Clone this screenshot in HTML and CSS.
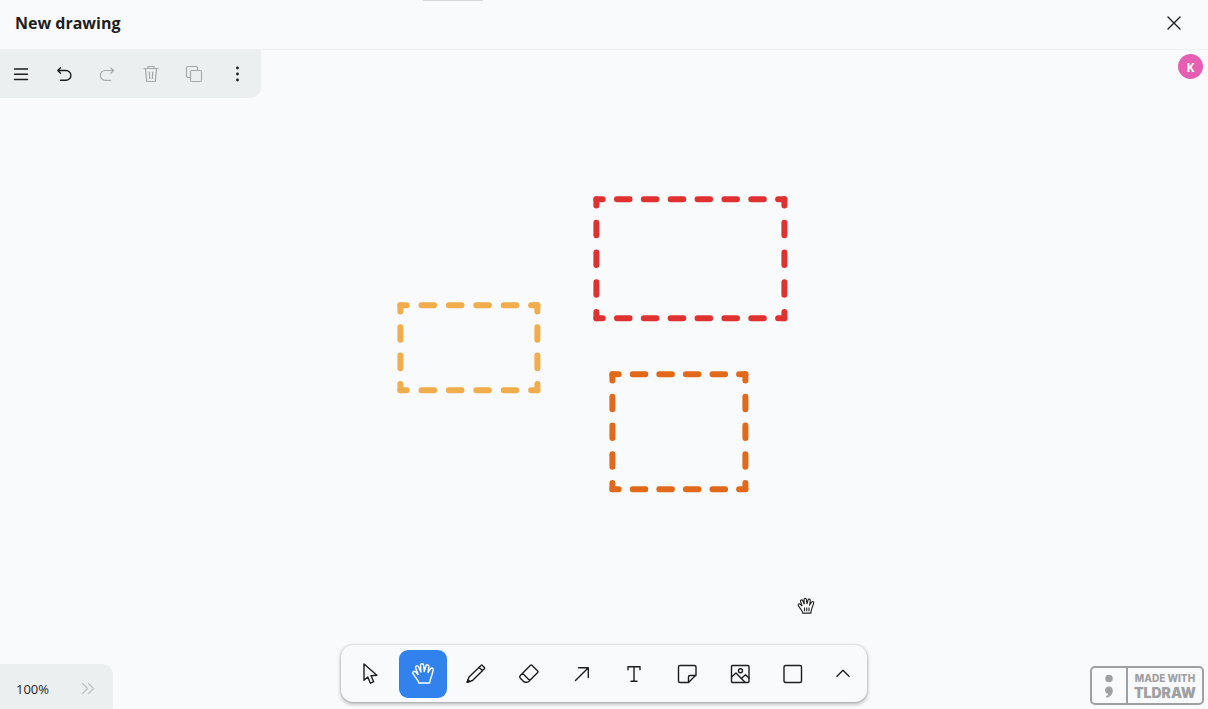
FILE: index.html
```html
<!DOCTYPE html>
<html lang="en">
<head>
<meta charset="utf-8">
<title>New drawing</title>
<link rel="stylesheet" href="styles.css">
</head>
<body>
<div class="app">
  <header class="header">
    <span class="grabber"></span>
    <h1 class="title">New drawing</h1>
    <button class="close" aria-label="Close">
      <svg class="icon icon-bold" viewBox="0 0 24 24"><path d="M6 6l12 12M18 6L6 18"/></svg>
    </button>
  </header>

  <main class="stage">
    <svg class="canvas" aria-label="Canvas">
      <g class="shape red">
        <path class="h7" d="M596.400 149.200H784.400M596.400 268.200H784.400"/>
        <path class="v4" d="M596.400 149.200V268.200M784.400 149.200V268.200"/>
      </g>
      <g class="shape yellow">
        <path class="h5" d="M400.400 255.200H537.400M400.400 340.200H537.400"/>
        <path class="v3" d="M400.400 255.200V340.200M537.400 255.200V340.200"/>
      </g>
      <g class="shape orange">
        <path class="h5" d="M612.400 324.200H745.400M612.400 439.200H745.400"/>
        <path class="v4" d="M612.400 324.200V439.200M745.400 324.200V439.200"/>
      </g>
    </svg>

    <nav class="menu" aria-label="Actions">
      <button aria-label="Menu"><svg class="icon icon-bold" viewBox="0 0 24 24"><path d="M4.500 7h13M4.500 12.300h13M4.500 17.500h13"/></svg></button>
      <button aria-label="Undo"><svg class="icon icon-bold" viewBox="0 0 24 24"><path d="M7.500 5.800L4.800 8.500l2.700 2.700M4.800 8.500H13a4.900 4.900 0 0 1 0 9.800H7.500"/></svg></button>
      <button aria-label="Redo" disabled><svg class="icon" viewBox="0 0 24 24"><path d="M14.800 5.800l2.700 2.700-2.700 2.700M17.500 8.500H9.300a4.900 4.900 0 0 0 0 9.800h5.500"/></svg></button>
      <button aria-label="Delete" disabled><svg class="icon" viewBox="0 0 24 24"><path d="M5 6.500h14M9 6.300V4.500h6v1.800M6.500 6.500l1.200 13h8.600l1.200-13M10.300 10l.4 6.500M13.700 10l-.4 6.500"/></svg></button>
      <button aria-label="Duplicate" disabled><svg class="icon" viewBox="0 0 24 24"><rect x="8.500" y="8.500" width="11" height="11" rx="1.500"/><path d="M8.500 15.500H6A1.500 1.500 0 0 1 4.500 14V6A1.500 1.500 0 0 1 6 4.500h8A1.500 1.500 0 0 1 15.500 6v2.500"/></svg></button>
      <button aria-label="More"><svg class="icon dots" viewBox="0 0 24 24"><circle cx="12.500" cy="6" r="1.400"/><circle cx="12.500" cy="12" r="1.400"/><circle cx="12.500" cy="18" r="1.400"/></svg></button>
    </nav>

    <span class="avatar">K</span>

    <svg class="pointer" viewBox="0 0 24 24">
      <path class="pointer-fill" d="M7.500 21.500C7.300 18.500 5.500 17 3.800 14.500L1.800 11.500C.9 9.700 3 8.300 4.500 9.900L6.800 12 4.700 6.200C4 4 6.800 3 7.700 5.100L9.700 9.700 9.400 3.700C9.300 1.200 12.300 1.200 12.600 3.500L13.200 9.300 14.700 4.200C15.300 2 18 2.600 17.700 4.900L16.900 10.200 19.600 6.800C20.900 5.200 23 6.300 22.200 8.300L20.400 13.500C19.700 16 18.600 17.500 18.500 21.500Z"/>
      <path d="M10 14v5M13 14v5M16 14v5"/>
    </svg>

    <div class="zoom">
      <button class="zoom-level">100%</button>
      <button class="zoom-more" aria-label="Expand"><svg class="icon icon-bold" viewBox="0 0 24 24"><path d="M6.500 6.500l5 5-5 5M12.500 6.500l5 5-5 5"/></svg></button>
    </div>

    <div class="toolbar" role="toolbar" aria-label="Tools">
      <button aria-label="Select"><svg class="icon icon-bold" viewBox="0 0 24 24"><path d="M6 2V18.300L9.800 14.900 12.400 21.200 15.700 19.700 13 13.700 18.900 13.200Z"/></svg></button>
      <button class="selected" aria-label="Hand" aria-pressed="true"><svg class="icon icon-bold" viewBox="0 0 24 24"><path d="M7.800 21C7.500 18.500 5.500 16.800 3.800 14.300L2 11.500C1.100 9.700 3.200 8.500 4.600 9.900L7.200 12.400 4.700 6C4 3.800 6.900 3 7.700 5.100L9.900 10 9.500 3.600C9.400 1.200 12.500 1.200 12.700 3.500L13.200 9.500 14.800 4.200C15.400 2 18.200 2.600 17.900 4.900L17 10.500 19.400 6.800C20.600 5.200 22.900 6.300 22.200 8.300L20.700 13.500C20 16 18.900 17.500 18.700 21Z"/></svg></button>
      <button aria-label="Draw"><svg class="icon icon-bold" viewBox="0 0 24 24"><path d="M3.200 20.300L5 15 17 3.400Q17.700 2.700 18.400 3.400L20.400 5.400Q21.100 6.100 20.400 6.800L8.500 18.500ZM15 5.300L18.500 8.700"/><path d="M3.200 20.300L4 17.800 5.700 19.400Z"/></svg></button>
      <button aria-label="Eraser"><svg class="icon icon-bold" viewBox="0 0 24 24"><path d="M3.300 13.500L13.500 3.300Q14.200 2.600 14.900 3.300L20.700 9.100Q21.400 9.800 20.700 10.500L11.500 19.700Q10.700 20.300 9.700 20.300H8.300Q7.300 20.300 6.600 19.600L3.300 16.200Q2 14.900 3.300 13.500ZM5.500 11.300L12.700 18.500"/></svg></button>
      <button aria-label="Arrow"><svg class="icon icon-bold" viewBox="0 0 24 24"><path d="M5.500 18.500L18.300 5.700M8.500 5.700H18.300V15.500"/></svg></button>
      <button aria-label="Text"><svg class="icon icon-bold" viewBox="0 0 24 24"><path d="M6 7.700V4.700H18V7.700M12 4.700V19.300M9 19.300H15"/></svg></button>
      <button aria-label="Note"><svg class="icon icon-bold" viewBox="0 0 24 24"><path d="M13.500 20.500H5A1.500 1.500 0 0 1 3.500 19V5A1.500 1.500 0 0 1 5 3.500H19.500A1.500 1.500 0 0 1 21 5V13L13.500 20.500V15A1.500 1.500 0 0 1 15 13.500H21"/></svg></button>
      <button aria-label="Image"><svg class="icon icon-bold" viewBox="0 0 24 24"><rect x="3.500" y="3.500" width="17.500" height="17" rx="1"/><circle cx="12.500" cy="8.700" r="2"/><path d="M3.500 15L8 11 17 20.300M13.300 16.500L17.500 12.700 21 16"/></svg></button>
      <button aria-label="Rectangle"><svg class="icon icon-bold" viewBox="0 0 24 24"><rect x="3" y="3.500" width="17.500" height="17" rx="1.500"/></svg></button>
      <button class="more" aria-label="More tools"><svg class="icon icon-bold" viewBox="0 0 24 24"><path d="M6 14.200L12 8.300 18 14.200"/></svg></button>
    </div>

    <a class="badge" href="#">
      <span class="badge-mark"><svg viewBox="0 0 12 28"><circle cx="6" cy="6.500" r="3.800"/><path d="M6 14.500c-2.400 0-3.900 1.600-3.900 3.700 0 2 1.300 3.400 3.200 3.500-.2 1.200-.9 1.900-1.900 2.400-.8.400-.6 1.500.4 1.400 3.500-.4 6-3.300 6-6.900 0-2.500-1.500-4.100-3.800-4.100z"/></svg></span>
      <span class="badge-text"><span class="badge-small">MADE WITH</span><span class="badge-large">TLDRAW</span></span>
    </a>
  </main>
</div>
</body>
</html>
```
FILE: styles.css
```css
* {
  box-sizing: border-box;
}

body {
  margin: 0;
  background: #f9fafc;
  color: #1d1d1d;
  font-family: "Noto Sans", "Open Sans", sans-serif;
}

button {
  display: flex;
  align-items: center;
  justify-content: center;
  padding: 0;
  border: 0;
  background: none;
  color: inherit;
  font: inherit;
}

.app {
  display: flex;
  flex-direction: column;
  height: 100vh;
}

.header {
  position: relative;
  display: flex;
  align-items: center;
  justify-content: space-between;
  height: 50px;
  padding: 0 22px 4px 15px;
  border-bottom: 1px solid #f0f1f3;
}

.grabber {
  position: absolute;
  top: 0;
  left: 35%;
  width: 60px;
  height: 1px;
  background: #d4d6d9;
}

.title {
  margin: 0;
  padding-top: 1px;
  font-family: "Open Sans", sans-serif;
  font-size: 16px;
  font-weight: 700;
  line-height: 24px;
}

.icon {
  display: block;
  width: 24px;
  height: 24px;
  fill: none;
  stroke: currentColor;
  stroke-width: 1.2;
  stroke-linecap: round;
  stroke-linejoin: round;
}

.icon-bold {
  stroke-width: 1.4;
}

.dots {
  fill: currentColor;
  stroke: none;
}

.stage {
  position: relative;
  flex: 1;
  min-height: 0;
  overflow: hidden;
}

.canvas {
  display: block;
  width: 100%;
  height: 100%;
}

.shape {
  fill: none;
  stroke-width: 6;
  stroke-linecap: round;
  stroke-dashoffset: 6.3;
}

.red { stroke: #e03131; }
.yellow { stroke: #f1ac4b; }
.orange { stroke: #e16919; }

.h7 { stroke-dasharray: 12.6 14.26; }
.h5 { stroke-dasharray: 12.6 14.8; }
.v3 { stroke-dasharray: 12.6 15.73; }
.v4 { stroke-dasharray: 12.6 17.15; }
.orange .h5 { stroke-dasharray: 12.6 14; }
.orange .v4 { stroke-dasharray: 12.6 16.15; }

.menu {
  position: absolute;
  top: 0;
  left: 0;
  display: flex;
  height: 48px;
  padding-right: 3px;
  border-radius: 0 0 11px 0;
  background: #eceff0;
}

.menu button {
  width: 43px;
}

.menu button:disabled {
  color: #a6a8a9;
}

.avatar {
  position: absolute;
  top: 4px;
  right: 5px;
  width: 25px;
  height: 25px;
  border-radius: 50%;
  background: #e55eb3;
  color: #fff;
  font-size: 12px;
  font-weight: 700;
  line-height: 27px;
  text-align: center;
}

.pointer {
  position: absolute;
  top: 547px;
  left: 797px;
  width: 18px;
  height: 18px;
  fill: none;
  stroke: #222;
  stroke-width: 1.5;
}

.pointer-fill {
  fill: #fff;
}

.zoom {
  position: absolute;
  bottom: 0;
  left: 0;
  display: flex;
  align-items: center;
  gap: 27px;
  height: 45px;
  padding: 4px 13px 0 16px;
  border-radius: 0 11px 0 0;
  background: #eceff0;
}

.zoom-level {
  font-family: "Open Sans", sans-serif;
  font-size: 13px;
}

.zoom-more {
  color: #bfc1c2;
}

.toolbar {
  position: absolute;
  bottom: 7px;
  left: 50%;
  display: flex;
  align-items: center;
  justify-content: space-between;
  width: 526px;
  max-width: 100%;
  height: 57px;
  padding: 0 3px 0 5px;
  border-radius: 12px;
  background: #f9fafc;
  box-shadow: 0 0 2px rgba(0, 0, 0, 0.25), 0 2px 4px rgba(0, 0, 0, 0.3);
  transform: translateX(-50%);
}

.toolbar button {
  width: 48px;
  height: 48px;
  border-radius: 9px;
}

.toolbar .selected {
  background: #3182ed;
  color: #fff;
}

.toolbar .more {
  width: 42px;
}

.badge {
  position: absolute;
  right: 4px;
  bottom: 4px;
  display: flex;
  height: 39px;
  border: 2px solid #9fa0a2;
  border-radius: 5px;
  color: #9fa0a2;
  font-family: Inter, sans-serif;
  text-decoration: none;
}

.badge-mark {
  display: flex;
  align-items: center;
  padding: 0 11px;
  border-right: 2px solid;
}

.badge-mark svg {
  width: 12px;
  height: 28px;
  fill: currentColor;
}

.badge-text {
  display: flex;
  flex-direction: column;
  align-items: center;
  justify-content: center;
  padding: 0 6px;
}

.badge-small {
  font-size: 10px;
  font-weight: 800;
  line-height: 14px;
}

.badge-large {
  font-size: 14px;
  font-weight: 900;
  line-height: 15px;
}
```
